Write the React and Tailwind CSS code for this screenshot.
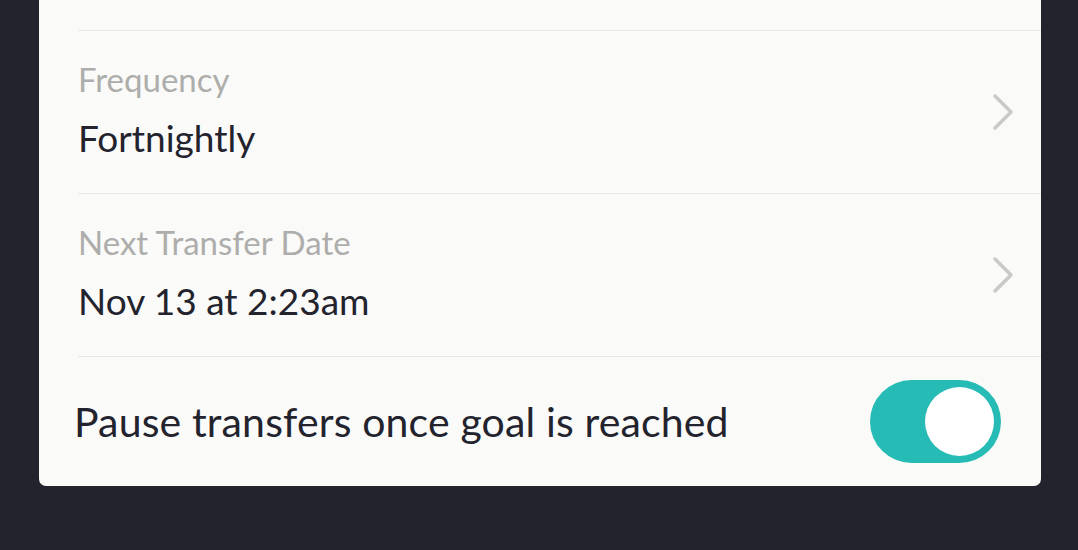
import { useState } from "react";

function Chevron() {
  return (
    <svg width="24" height="38" viewBox="0 0 24 38" fill="none" className="shrink-0">
      <path d="M4 3 L20 19 L4 35" stroke="#c9c9c7" strokeWidth="3.5" strokeLinecap="round" strokeLinejoin="round" />
    </svg>
  );
}

function SettingRow({ label, value }) {
  return (
    <div className="flex h-[163px] items-start border-b border-[#e6e6e3] pr-[26px]">
      <div className="flex flex-1 flex-col pt-[28px]">
        <span className="text-[33px] leading-[40px] text-[#adadab]">{label}</span>
        <span className="mt-[17px] text-[37px] leading-[44px] text-[#23232e]">{value}</span>
      </div>
      <div className="self-center">
        <Chevron />
      </div>
    </div>
  );
}

export default function App() {
  const [paused, setPaused] = useState(true);

  return (
    <div className="h-[550px] w-full bg-[#23232e] font-['Lato',sans-serif]">
      <div className="ml-[39px] w-[1002px] rounded-b-[7px] bg-[#fafaf8]">
        <div className="pl-[39px]">
          <div className="h-[31px] border-b border-[#e6e6e3]" />
          <SettingRow label="Frequency" value="Fortnightly" />
          <SettingRow label="Next Transfer Date" value="Nov 13 at 2:23am" />
        </div>
        <div className="flex h-[129px] items-center justify-between pl-[35px] pr-[40px]">
          <span className="text-[41px] leading-[48px] tracking-[0.15px] text-[#23232e]">Pause transfers once goal is reached</span>
          <button
            onClick={() => setPaused(!paused)}
            className={`flex h-[83px] w-[131px] items-center rounded-full p-[7px] ${paused ? "justify-end bg-[#27bbb6]" : "justify-start bg-[#d5d5d3]"}`}
          >
            <span className="h-[69px] w-[69px] rounded-full bg-white" />
          </button>
        </div>
      </div>
    </div>
  );
}
